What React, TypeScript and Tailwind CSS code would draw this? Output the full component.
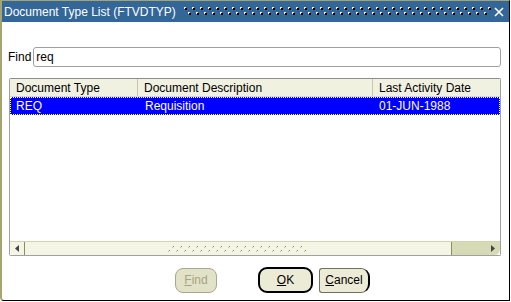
import React from "react";

const font = { fontFamily: '"Liberation Sans", Arial, sans-serif' };

// Title bar grip dots
const Grip = () => (
  <svg width="310" height="12" className="block">
    <defs>
      <pattern id="grip" width="8" height="12" patternUnits="userSpaceOnUse">
        <rect x="1" y="1" width="2" height="2" fill="#f4f1c8" />
        <rect x="2" y="2" width="2" height="2" fill="#000" />
        <rect x="1" y="2" width="1" height="1" fill="#f4f1c8" />
        <rect x="5" y="6" width="2" height="2" fill="#f4f1c8" />
        <rect x="6" y="7" width="2" height="2" fill="#000" />
      </pattern>
    </defs>
    <rect width="310" height="12" fill="url(#grip)" />
  </svg>
);

const ScrollGrip = () => (
  <svg width="140" height="8" className="block">
    <defs>
      <pattern id="sgrip" width="8" height="8" patternUnits="userSpaceOnUse">
        <rect x="5" y="1" width="1" height="1" fill="#8a8a50" />
        <rect x="4" y="2" width="1" height="1" fill="#c8c89a" />
        <rect x="1" y="5" width="1" height="1" fill="#8a8a50" />
        <rect x="0" y="6" width="1" height="1" fill="#c8c89a" />
      </pattern>
    </defs>
    <rect width="140" height="8" fill="url(#sgrip)" />
  </svg>
);

export default function App() {
  return (
    <div className="w-[511px] h-[302px] bg-white overflow-hidden text-[12px] text-black" style={font}>
      <div className="w-[510px] h-[301px] border-t border-t-[#a8a470] border-l-2 border-l-[#a8a470] border-r border-r-black border-b border-b-black rounded-bl-[4px] flex flex-col">
        {/* Title bar */}
        <div className="h-[21px] bg-[#336699] flex items-center pl-[2px] pr-[4px] text-white">
          <span className="leading-none">Document Type List (FTVDTYP)</span>
          <div className="ml-[7px] flex-1 flex items-center overflow-hidden">
            <Grip />
          </div>
          <svg width="12" height="12" viewBox="0 0 12 12" className="ml-[2px]">
            <path d="M2 2 L10 10 M10 2 L2 10" stroke="#fff" strokeWidth="1.6" />
          </svg>
        </div>

        {/* Find row */}
        <div className="mt-[25px] ml-[6px] flex items-center">
          <span className="mr-[2px]">Find</span>
          <div className="w-[468px] h-[20px] border border-[#a0a0a0] rounded-[3px] flex items-center pl-[2px] bg-white">
            req
          </div>
        </div>

        {/* List */}
        <div className="mt-[11px] ml-[7px] w-[492px] h-[178px] border border-[#a0a0a0] border-t-[#8c8c8c] rounded-[2px] flex flex-col bg-white">
          <div className="h-[18px] bg-[#f1f1e1] flex items-center border-b border-[#d8d8c8]">
            <div className="w-[128px] pl-[6px] border-r border-[#c8c8b0] h-full flex items-center">Document Type</div>
            <div className="w-[235px] pl-[6px] border-r border-[#c8c8b0] h-full flex items-center">Document Description</div>
            <div className="flex-1 pl-[6px] h-full flex items-center">Last Activity Date</div>
          </div>
          <div className="h-[18px] bg-[#0000ff] text-white flex items-center border border-dotted border-white">
            <div className="w-[127px] pl-[5px]">REQ</div>
            <div className="w-[235px] pl-[7px]">Requisition</div>
            <div className="flex-1 pl-[6px]">01-JUN-1988</div>
          </div>
          <div className="flex-1" />
          {/* Horizontal scrollbar */}
          <div className="h-[14px] flex items-stretch bg-[#f5f5e6] border-t border-[#d0d4b0] rounded-b-[4px]">
            <div className="w-[14px] flex items-center justify-center">
              <svg width="4" height="7" viewBox="0 0 4 7">
                <path d="M4 0 L0 3.5 L4 7 Z" fill="#444" />
              </svg>
            </div>
            <div className="w-[428px] border-l border-r border-[#8c8c60] flex items-center justify-center">
              <ScrollGrip />
            </div>
            <div className="flex-1 bg-[#d6dbb6] flex items-center justify-end pr-[5px] rounded-br-[6px]">
              <svg width="4" height="7" viewBox="0 0 4 7">
                <path d="M0 0 L4 3.5 L0 7 Z" fill="#444" />
              </svg>
            </div>
          </div>
        </div>

        {/* Buttons */}
        <div className="mt-[11px] flex items-center">
          <div className="ml-[173px] w-[42px] h-[25px] rounded-[8px] border border-[#a8a890] bg-[#e2e2c8] flex items-center justify-center text-[#a6a482]">
            <span><span className="underline">F</span>ind</span>
          </div>
          <div className="ml-[41px] w-[55px] h-[26px] rounded-[9px] border-2 border-black bg-[#ecebd6] flex items-center justify-center">
            <span><span className="underline">O</span>K</span>
          </div>
          <div className="ml-[6px] w-[51px] h-[25px] rounded-l-[3px] rounded-r-[9px] border border-[#707060] border-r-2 border-r-black bg-[#ecebd6] flex items-center justify-center">
            <span><span className="underline">C</span>ancel</span>
          </div>
        </div>
      </div>
    </div>
  );
}
